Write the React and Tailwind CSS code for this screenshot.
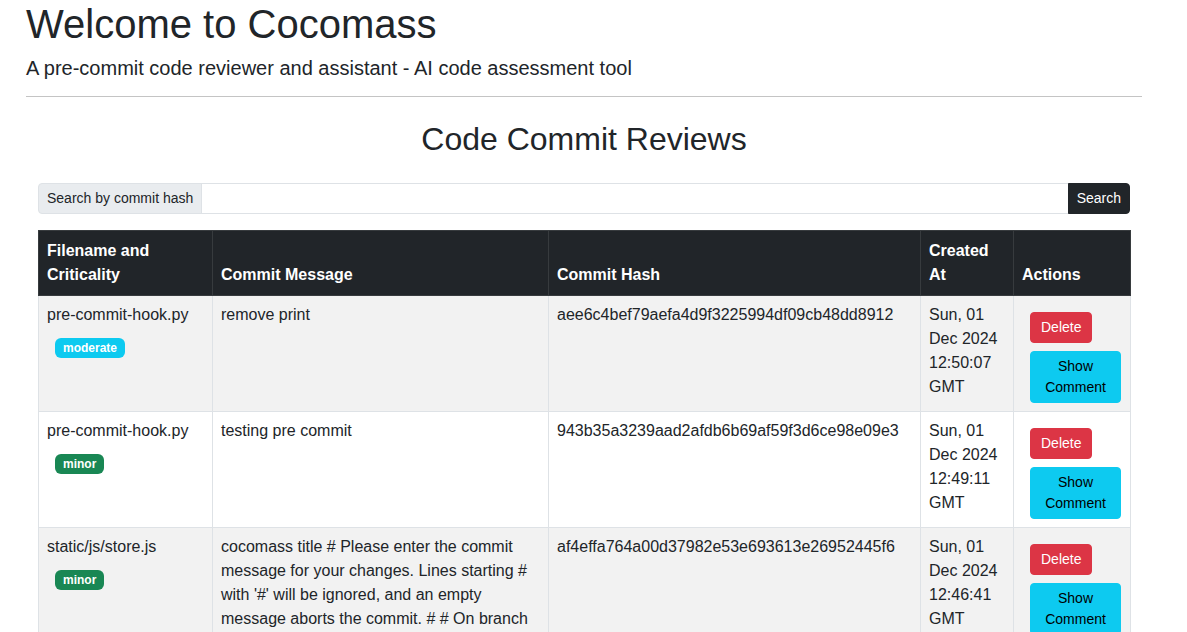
import { useState } from "react";

const reviews = [
    {
        file: "pre-commit-hook.py",
        level: "moderate",
        message: "remove print",
        hash: "aee6c4bef79aefa4d9f3225994df09cb48dd8912",
        date: "Sun, 01 Dec 2024 12:50:07 GMT",
    },
    {
        file: "pre-commit-hook.py",
        level: "minor",
        message: "testing pre commit",
        hash: "943b35a3239aad2afdb6b69af59f3d6ce98e09e3",
        date: "Sun, 01 Dec 2024 12:49:11 GMT",
    },
    {
        file: "static/js/store.js",
        level: "minor",
        message:
            "cocomass title # Please enter the commit message for your changes. Lines starting # with '#' will be ignored, and an empty message aborts the commit. # # On branch main # Changes to be committed: # modified: static/js/store.js #",
        hash: "af4effa764a00d37982e53e693613e26952445f6",
        date: "Sun, 01 Dec 2024 12:46:41 GMT",
    },
];

const badgeColors = {
    moderate: "bg-[#0dcaf0]",
    minor: "bg-[#198754]",
};

export default function App() {
    const [query, setQuery] = useState("");

    return (
        <div className="ml-[26px] w-[1116px] bg-white text-[#212529] font-['Liberation_Sans',Arial,sans-serif]">
            <header>
                <h1 className="text-[40px] leading-[48px] mb-2">
                    Welcome to Cocomass
                </h1>
                <h5 className="text-[20px] leading-6">
                    A pre-commit code reviewer and assistant - AI code assessment tool
                </h5>
                <hr className="mt-4 border-t border-[#c4c4c4]" />
            </header>

            <div className="px-3 pt-[23px]">
                <h2 className="text-[32px] leading-[38px] text-center mb-[25px]">
                    Code Commit Reviews
                </h2>

                <form
                    className="flex mb-4"
                    onSubmit={(e) => e.preventDefault()}
                >
                    <span className="px-2 py-1 text-sm leading-[21px] bg-[#e9ecef] border border-[#dee2e6] rounded-l-[4px]">
                        Search by commit hash
                    </span>
                    <input
                        value={query}
                        onChange={(e) => setQuery(e.target.value)}
                        className="flex-1 min-w-0 -ml-px px-2 py-1 text-sm leading-[21px] border border-[#dee2e6] outline-none"
                    />
                    <button className="-ml-px px-2 py-1 text-sm leading-[21px] bg-[#212529] text-white border border-[#212529] rounded-r-[4px]">
                        Search
                    </button>
                </form>

                <table className="w-full table-fixed border-collapse text-base leading-6">
                    <colgroup>
                        <col className="w-[174px]" />
                        <col className="w-[336px]" />
                        <col className="w-[372px]" />
                        <col className="w-[93px]" />
                        <col className="w-[117px]" />
                    </colgroup>
                    <thead>
                        <tr className="bg-[#212529] text-white">
                            {["Filename and Criticality", "Commit Message", "Commit Hash", "Created At", "Actions"].map((h) => (
                                <th
                                    key={h}
                                    className="p-2 text-left align-bottom font-bold border border-[#373b3e]"
                                >
                                    {h}
                                </th>
                            ))}
                        </tr>
                    </thead>
                    <tbody>
                        {reviews.map((r, i) => (
                            <tr
                                key={r.hash}
                                className={i % 2 === 0 ? "bg-[#f2f2f2]" : "bg-white"}
                            >
                                <td className="px-2 pt-[7px] pb-2 align-top border border-[#dee2e6]">
                                    {r.file}
                                    <div className="mt-[8px]">
                                        <span
                                            className={`ml-2 inline-block px-[8px] py-[4px] rounded-[6px] text-[12px] leading-3 font-bold text-white ${badgeColors[r.level]}`}
                                        >
                                            {r.level}
                                        </span>
                                    </div>
                                </td>
                                <td className="px-2 pt-[7px] pb-2 align-top border border-[#dee2e6]">
                                    {r.message}
                                </td>
                                <td className="px-2 pt-[7px] pb-2 align-top border border-[#dee2e6] break-all">
                                    {r.hash}
                                </td>
                                <td className="px-2 pt-[7px] pb-2 align-top border border-[#dee2e6]">
                                    {r.date}
                                </td>
                                <td className="p-2 align-top border border-[#dee2e6]">
                                    <div className="flex flex-col items-start gap-2 pl-2 pt-2">
                                        <button className="px-[10px] py-1 text-sm leading-[21px] rounded-[4px] bg-[#dc3545] border border-[#dc3545] text-white">
                                            Delete
                                        </button>
                                        <button className="w-[91px] px-2 py-1 text-sm leading-[21px] rounded-[4px] bg-[#0dcaf0] border border-[#0dcaf0] text-black">
                                            Show Comment
                                        </button>
                                    </div>
                                </td>
                            </tr>
                        ))}
                    </tbody>
                </table>
            </div>
        </div>
    );
}
